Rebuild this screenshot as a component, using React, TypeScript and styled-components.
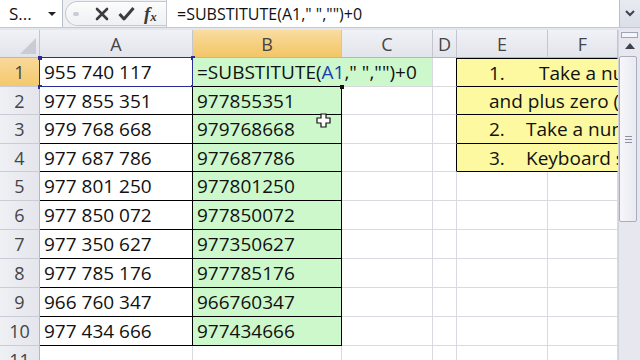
import React from 'react';
import styled, { createGlobalStyle } from 'styled-components';

const GlobalStyle = createGlobalStyle`
  html, body {
    margin: 0;
    padding: 0;
    background: #ffffff;
  }
  body {
    font-family: "Open Sans", "Liberation Sans", sans-serif;
  }
`;

const GRID = '#d9dadf';
const BLACK = '#000000';
const GREEN = '#cdf8cc';
const YELLOW = '#fcf9a0';

const colWidths = [40, 153, 149, 91, 24, 91, 70];
const rowHeights = [29, 28, 29, 28, 29, 29, 29, 29, 29, 29, 29];

const aValues = [
  '955 740 117',
  '977 855 351',
  '979 768 668',
  '977 687 786',
  '977 801 250',
  '977 850 072',
  '977 350 627',
  '977 785 176',
  '966 760 347',
  '977 434 666',
];

const Window = styled.div`
  width: 640px;
  height: 360px;
  overflow: hidden;
  background: #e3e6ee;
  display: flex;
  flex-direction: column;
`;

const FormulaBar = styled.div`
  height: 27px;
  display: flex;
  align-items: stretch;
  background: #eef0f4;
  border-bottom: 1px solid #c3c8d3;
  flex-shrink: 0;
`;

const NameBox = styled.div`
  width: 63px;
  background: #ffffff;
  border-right: 1px solid #b9bfca;
  display: flex;
  align-items: center;
  justify-content: space-between;
  padding: 0 6px 0 9px;
  box-sizing: border-box;
  font-size: 17px;
  color: #111;
`;

const DropArrow = styled.span`
  width: 0;
  height: 0;
  border-left: 4px solid transparent;
  border-right: 4px solid transparent;
  border-top: 4px solid #222;
`;

const IconStrip = styled.div`
  width: 101px;
  margin-left: 2px;
  margin-top: 1px;
  margin-bottom: 1px;
  display: flex;
  align-items: center;
  gap: 9px;
  background: linear-gradient(#fcfcfc, #eef0f3);
  border: 1px solid #c4c9d2;
  border-right: none;
  border-radius: 13px 0 0 13px;
  padding-left: 7px;
  box-sizing: border-box;
`;

const Grip = styled.span`
  width: 6px;
  height: 4px;
  border-radius: 3px;
  background: #c9ccd3;
  margin-right: 7px;
`;

const Fx = styled.span`
  font-family: "Liberation Serif", "DejaVu Serif", serif;
  font-style: italic;
  font-weight: bold;
  font-size: 19px;
  color: #3a3a3a;
  line-height: 1;
  sub {
    font-size: 13px;
    vertical-align: -1px;
  }
`;

const FormulaInput = styled.div`
  flex: 1;
  background: #ffffff;
  border-left: 1px solid #c4c9d2;
  display: flex;
  align-items: center;
  padding-left: 10px;
  font-size: 16px;
  color: #111;
  white-space: nowrap;
`;

const ExpandButton = styled.div`
  width: 20px;
  background: linear-gradient(#e9ebf1, #dadee7);
  border-left: 1px solid #b9bfca;
  display: flex;
  align-items: center;
  justify-content: center;
`;

const SheetArea = styled.div`
  flex: 1;
  display: flex;
  margin-top: 2px;
  min-height: 0;
`;

const Grid = styled.div`
  width: 618px;
  overflow: hidden;
  display: grid;
  grid-template-columns: ${colWidths.map((w) => `${w}px`).join(' ')};
  grid-template-rows: 28px ${rowHeights.map((h) => `${h}px`).join(' ')};
  background: #ffffff;
  align-content: start;
`;

const HeaderCell = styled.div<{ $selected?: boolean }>`
  background: ${({ $selected }) =>
    $selected ? 'linear-gradient(#f9dc9f, #f3c566)' : 'linear-gradient(#f1f2f6, #e2e4eb)'};
  border-right: 1px solid #c3c6cf;
  border-bottom: 1px solid #b3b7c2;
  box-sizing: border-box;
  display: flex;
  align-items: center;
  justify-content: center;
  font-size: 18px;
  color: #454545;
`;

const Corner = styled(HeaderCell)`
  position: relative;
  &::after {
    content: '';
    position: absolute;
    right: 3px;
    bottom: 3px;
    width: 0;
    height: 0;
    border-left: 16px solid transparent;
    border-bottom: 16px solid #c9ccd4;
  }
`;

const RowHeader = styled.div<{ $selected?: boolean }>`
  background: ${({ $selected }) =>
    $selected ? 'linear-gradient(#f9d99a, #f4c86c)' : 'linear-gradient(90deg, #eef0f4, #e4e6ec)'};
  border-right: 1px solid #b3b7c2;
  border-bottom: 1px solid #c9ccd4;
  box-sizing: border-box;
  display: flex;
  align-items: center;
  justify-content: center;
  font-size: 18px;
  color: #454545;
`;

const Cell = styled.div<{
  $bg?: string;
  $right?: string;
  $bottom?: string;
  $top?: string;
  $span?: number;
  $raise?: boolean;
  $indent?: number;
}>`
  position: relative;
  z-index: ${({ $raise }) => ($raise ? 1 : 0)};
  grid-column: ${({ $span }) => ($span ? `span ${$span}` : 'auto')};
  background: ${({ $bg }) => $bg || '#ffffff'};
  border-right: 1px solid ${({ $right }) => $right || GRID};
  border-bottom: 1px solid ${({ $bottom }) => $bottom || GRID};
  border-top: ${({ $top }) => ($top ? `1px solid ${$top}` : 'none')};
  box-sizing: border-box;
  display: flex;
  align-items: center;
  padding-left: ${({ $indent }) => $indent ?? 4}px;
  font-size: 19px;
  color: #111;
  white-space: nowrap;
  overflow: visible;
`;

const RangeBox = styled.div`
  position: absolute;
  left: -1px;
  top: -1px;
  right: -1px;
  bottom: -1px;
  border: 1px solid #2a2d96;
  pointer-events: none;
`;

const Handle = styled.span<{ $x: 'left' | 'right'; $y: 'top' | 'bottom'; $color?: string }>`
  position: absolute;
  width: 4px;
  height: 4px;
  background: ${({ $color }) => $color || '#2a2d96'};
  ${({ $x }) => ($x === 'left' ? 'left: -2px;' : 'right: -3px;')}
  ${({ $y }) => ($y === 'top' ? 'top: -2px;' : 'bottom: -3px;')}
`;

const RefText = styled.span`
  color: #1b3fb4;
`;

const ListLabel = styled.span<{ $w: number }>`
  display: inline-block;
  width: ${({ $w }) => $w}px;
`;

const Scrollbar = styled.div`
  width: 22px;
  background: #e6e7ef;
  border-left: 1px solid #d0d3dc;
  box-sizing: border-box;
  display: flex;
  flex-direction: column;
  align-items: center;
`;

const SplitBox = styled.div`
  width: 17px;
  height: 6px;
  margin-top: 2px;
  border: 1px solid #9ea5b6;
  background: #f4f5f8;
  box-sizing: border-box;
`;

const ArrowButton = styled.div`
  height: 16px;
  width: 100%;
  display: flex;
  align-items: center;
  justify-content: center;
`;

const Thumb = styled.div`
  width: 18px;
  height: 166px;
  margin-top: 2px;
  margin-right: 3px;
  align-self: flex-start;
  background: linear-gradient(90deg, #f6f6fa, #e9eaf2);
  border: 1px solid #a8aebe;
  border-radius: 2px;
  box-sizing: border-box;
  display: flex;
  align-items: center;
  justify-content: center;
`;

const GripLines = styled.div`
  width: 7px;
  height: 5px;
  border-top: 1px solid #8a90a0;
  border-bottom: 1px solid #8a90a0;
  position: relative;
  &::after {
    content: '';
    position: absolute;
    left: 0;
    right: 0;
    top: 2px;
    border-top: 1px solid #8a90a0;
  }
`;

const Cursor = styled.svg`
  position: absolute;
  left: 316px;
  top: 113px;
  pointer-events: none;
  z-index: 5;
`;

const Stage = styled.div`
  position: relative;
`;

export default function App() {
  const cols = ['A', 'B', 'C', 'D', 'E', 'F'];
  // only the part of each note that fits before the scrollbar
  const eRows: React.ReactNode[] = [
    <>
      <ListLabel $w={50}>1.</ListLabel>Take a nu
    </>,
    <>and plus zero (p</>,
    <>
      <ListLabel $w={37}>2.</ListLabel>Take a num
    </>,
    <>
      <ListLabel $w={37}>3.</ListLabel>Keyboard s
    </>,
  ];

  return (
    <Stage>
      <GlobalStyle />
      <Window>
        <FormulaBar>
          <NameBox>
            S...
            <DropArrow />
          </NameBox>
          <IconStrip>
            <Grip />
            <svg width="14" height="14" viewBox="0 0 14 14">
              <path d="M2 2 L12 12 M12 2 L2 12" stroke="#3c3c3c" strokeWidth="2.6" strokeLinecap="round" />
            </svg>
            <svg width="17" height="15" viewBox="0 0 17 15">
              <path d="M1.5 8 L6 13 L15.5 2" fill="none" stroke="#3c3c3c" strokeWidth="3" strokeLinejoin="round" />
            </svg>
            <Fx>
              f<sub>x</sub>
            </Fx>
          </IconStrip>
          <FormulaInput>=SUBSTITUTE(A1," ","")+0</FormulaInput>
          <ExpandButton>
            <svg width="10" height="7" viewBox="0 0 10 7">
              <path d="M1 1 L5 5 L9 1" fill="none" stroke="#3d4250" strokeWidth="2" />
            </svg>
          </ExpandButton>
        </FormulaBar>

        <SheetArea>
          <Grid>
            <Corner />
            {cols.map((c) => (
              <HeaderCell key={c} $selected={c === 'B'}>
                {c}
              </HeaderCell>
            ))}

            {rowHeights.map((_, i) => {
              const r = i + 1;
              const inTable = r <= 10;
              const inList = r <= 4;
              return (
                <React.Fragment key={r}>
                  <RowHeader $selected={r === 1}>{r}</RowHeader>
                  {r === 1 ? (
                    <>
                      <Cell $bottom="#2a2d96" $right="#2a2d96">
                        {aValues[0]}
                        <RangeBox>
                          <Handle $x="left" $y="top" />
                          <Handle $x="right" $y="top" />
                          <Handle $x="left" $y="bottom" />
                          <Handle $x="right" $y="bottom" />
                        </RangeBox>
                      </Cell>
                      <Cell $bg={GREEN} $right={GREEN} $bottom={BLACK} $raise>
                        =SUBSTITUTE(<RefText>A1</RefText>," ","")+0
                        <Handle $x="right" $y="bottom" $color="#111" />
                      </Cell>
                      <Cell $bg={GREEN} />
                    </>
                  ) : (
                    <>
                      <Cell $right={inTable ? BLACK : undefined} $bottom={inTable ? BLACK : undefined}>
                        {inTable ? aValues[i] : ''}
                      </Cell>
                      <Cell
                        $bg={inTable ? GREEN : undefined}
                        $right={inTable ? BLACK : undefined}
                        $bottom={inTable ? BLACK : undefined}
                      >
                        {inTable ? aValues[i].replace(/ /g, '') : ''}
                      </Cell>
                      <Cell />
                    </>
                  )}
                  <Cell $right={inList ? BLACK : undefined} />
                  {inList ? (
                    <Cell
                      $span={2}
                      $bg={YELLOW}
                      $right={YELLOW}
                      $bottom={BLACK}
                      $top={r === 1 ? BLACK : undefined}
                      $indent={32}
                    >
                      <span>{eRows[i]}</span>
                    </Cell>
                  ) : (
                    <>
                      <Cell />
                      <Cell />
                    </>
                  )}
                </React.Fragment>
              );
            })}
          </Grid>

          <Scrollbar>
            <SplitBox />
            <ArrowButton>
              <svg width="10" height="6" viewBox="0 0 10 6">
                <path d="M0 6 L5 0 L10 6 Z" fill="#3d4250" />
              </svg>
            </ArrowButton>
            <Thumb>
              <GripLines />
            </Thumb>
          </Scrollbar>
        </SheetArea>
      </Window>

      <Cursor width="15" height="15" viewBox="0 0 15 15">
        <path
          d="M5 1 H10 V5 H14 V10 H10 V14 H5 V10 H1 V5 H5 Z"
          fill="#ffffff"
          stroke="#111"
          strokeWidth="1.2"
        />
      </Cursor>
    </Stage>
  );
}
